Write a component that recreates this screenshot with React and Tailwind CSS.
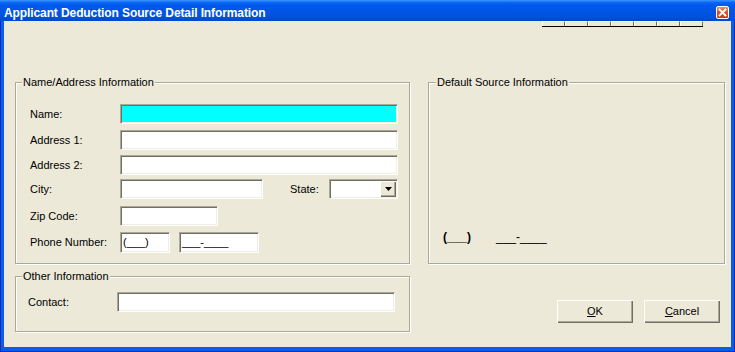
import React from "react";

const sunken =
  "bg-white border border-t-[#aca899] border-l-[#aca899] border-r-white border-b-white shadow-[inset_1px_1px_0_#716f64,inset_-1px_-1px_0_#f1efe2]";
const groupBox =
  "relative border border-[#aca899] shadow-[inset_1px_1px_0_#fff,1px_1px_0_#fff]";
const legend =
  "absolute top-[-7px] px-[1px] bg-[#ece9d8] leading-[13px] whitespace-nowrap";

function Row({ label, mt = "", children, h = "h-[20px]" }) {
  return (
    <div className={`flex items-center ${h} ${mt}`}>
      <div className="w-[90px] shrink-0 leading-[13px]">{label}</div>
      {children}
    </div>
  );
}

function Button({ children, className = "" }) {
  return (
    <div
      className={`w-[76px] h-[23px] flex items-center justify-center bg-[#ece9d8] shadow-[inset_1px_1px_0_#fff,inset_-1px_-1px_0_#716f64,inset_-2px_-2px_0_#aca899] leading-[13px] ${className}`}
    >
      {children}
    </div>
  );
}

export default function App() {
  return (
    <div className="w-[735px] h-[352px] overflow-hidden flex flex-col bg-[#0a5be8] shadow-[inset_1px_0_0_#0030b8,inset_-1px_0_0_#0030b8,inset_0_-1px_0_#0030b8] font-['Liberation_Sans',Arial,sans-serif] text-[11px] text-black">
      {/* Title bar */}
      <div className="h-[21px] shrink-0 flex items-start bg-[linear-gradient(to_bottom,#3d95ff_0%,#0a66f5_12%,#0058ee_25%,#0054e3_60%,#0050dc_85%,#0046c8_100%)]">
        <div className="pl-[4px] pt-[6px] text-white font-bold text-[12px] leading-[14px] tracking-[-0.1px] whitespace-nowrap">
          Applicant Deduction Source Detail Information
        </div>
        <div className="ml-auto mr-[6px] mt-[6px] w-[13px] h-[13px] rounded-[2px] border border-white bg-[linear-gradient(to_bottom,#ea8a6b,#d9542c_50%,#c63c17)] flex items-center justify-center">
          <svg width="9" height="9" viewBox="0 0 9 9">
            <path d="M1.5 1.5 L7.5 7.5 M7.5 1.5 L1.5 7.5" stroke="white" strokeWidth="1.8" strokeLinecap="square" />
          </svg>
        </div>
      </div>

      {/* Body */}
      <div className="flex-1 mx-[4px] mb-[5px] bg-[#ece9d8] flex flex-col pl-[11px]">
        {/* Tab strip remnants */}
        <div className="flex justify-end pr-[28px]">
          <div className="flex border-b border-black">
            {Array.from({ length: 7 }).map((_, i) => (
              <div
                key={i}
                className="w-[23px] h-[5px] bg-[#ece9d8] border-l border-white border-r border-r-[#716f64] border-t border-t-[#f5f4ee]"
              />
            ))}
          </div>
        </div>

        {/* Row 1 */}
        <div className="flex mt-[55px] gap-[18px]">
          <div className={`${groupBox} w-[395px] h-[182px] pt-[21px] pl-[14px]`}>
            <span className={`${legend} left-[6px]`}>Name/Address Information</span>
            <Row label="Name:">
              <div className={`${sunken} !bg-[#00ffff] w-[278px] h-[20px]`} />
            </Row>
            <Row label="Address 1:" mt="mt-[6px]">
              <div className={`${sunken} w-[278px] h-[20px]`} />
            </Row>
            <Row label="Address 2:" mt="mt-[5px]">
              <div className={`${sunken} w-[278px] h-[20px]`} />
            </Row>
            <Row label="City:" mt="mt-[4px]">
              <div className={`${sunken} w-[143px] h-[20px]`} />
              <div className="ml-[27px] w-[39px] leading-[13px]">State:</div>
              <div className={`${sunken} w-[69px] h-[20px] flex items-center justify-end pr-[1px]`}>
                <div className="w-[16px] h-[16px] bg-[#ece9d8] shadow-[inset_1px_1px_0_#fff,inset_-1px_-1px_0_#716f64,inset_-2px_-2px_0_#aca899] flex items-center justify-center">
                  <svg width="7" height="4" viewBox="0 0 7 4">
                    <path d="M0 0 H7 L3.5 4 Z" fill="black" />
                  </svg>
                </div>
              </div>
            </Row>
            <Row label="Zip Code:" mt="mt-[7px]">
              <div className={`${sunken} w-[98px] h-[20px]`} />
            </Row>
            <Row label="Phone Number:" mt="mt-[6px]" h="h-[21px]">
              <div className={`${sunken} w-[50px] h-[21px] flex items-center pl-[2px] leading-[13px]`}>(___)</div>
              <div className={`${sunken} ml-[9px] w-[80px] h-[21px] flex items-center pl-[2px] leading-[13px]`}>___-____</div>
            </Row>
          </div>

          <div className={`${groupBox} w-[297px] h-[182px] pt-[147px] pl-[14px]`}>
            <span className={`${legend} left-[7px]`}>Default Source Information</span>
            <div className="flex items-center h-[14px] text-[12px] leading-[14px]">
              <span className="w-[53px] font-bold">(___)</span>
              <span>___-____</span>
            </div>
          </div>
        </div>

        {/* Row 2 */}
        <div className="flex mt-[12px]">
          <div className={`${groupBox} w-[395px] h-[56px] pt-[15px] pl-[12px]`}>
            <span className={`${legend} left-[6px]`}>Other Information</span>
            <div className="flex items-center h-[20px]">
              <div className="w-[89px] shrink-0 leading-[13px]">Contact:</div>
              <div className={`${sunken} w-[278px] h-[20px]`} />
            </div>
          </div>
          <div className="flex gap-[11px] ml-[147px] mt-[24px] h-[23px]">
            <Button>
              <span><span className="underline">O</span>K</span>
            </Button>
            <Button>
              <span><span className="underline">C</span>ancel</span>
            </Button>
          </div>
        </div>
      </div>
    </div>
  );
}
